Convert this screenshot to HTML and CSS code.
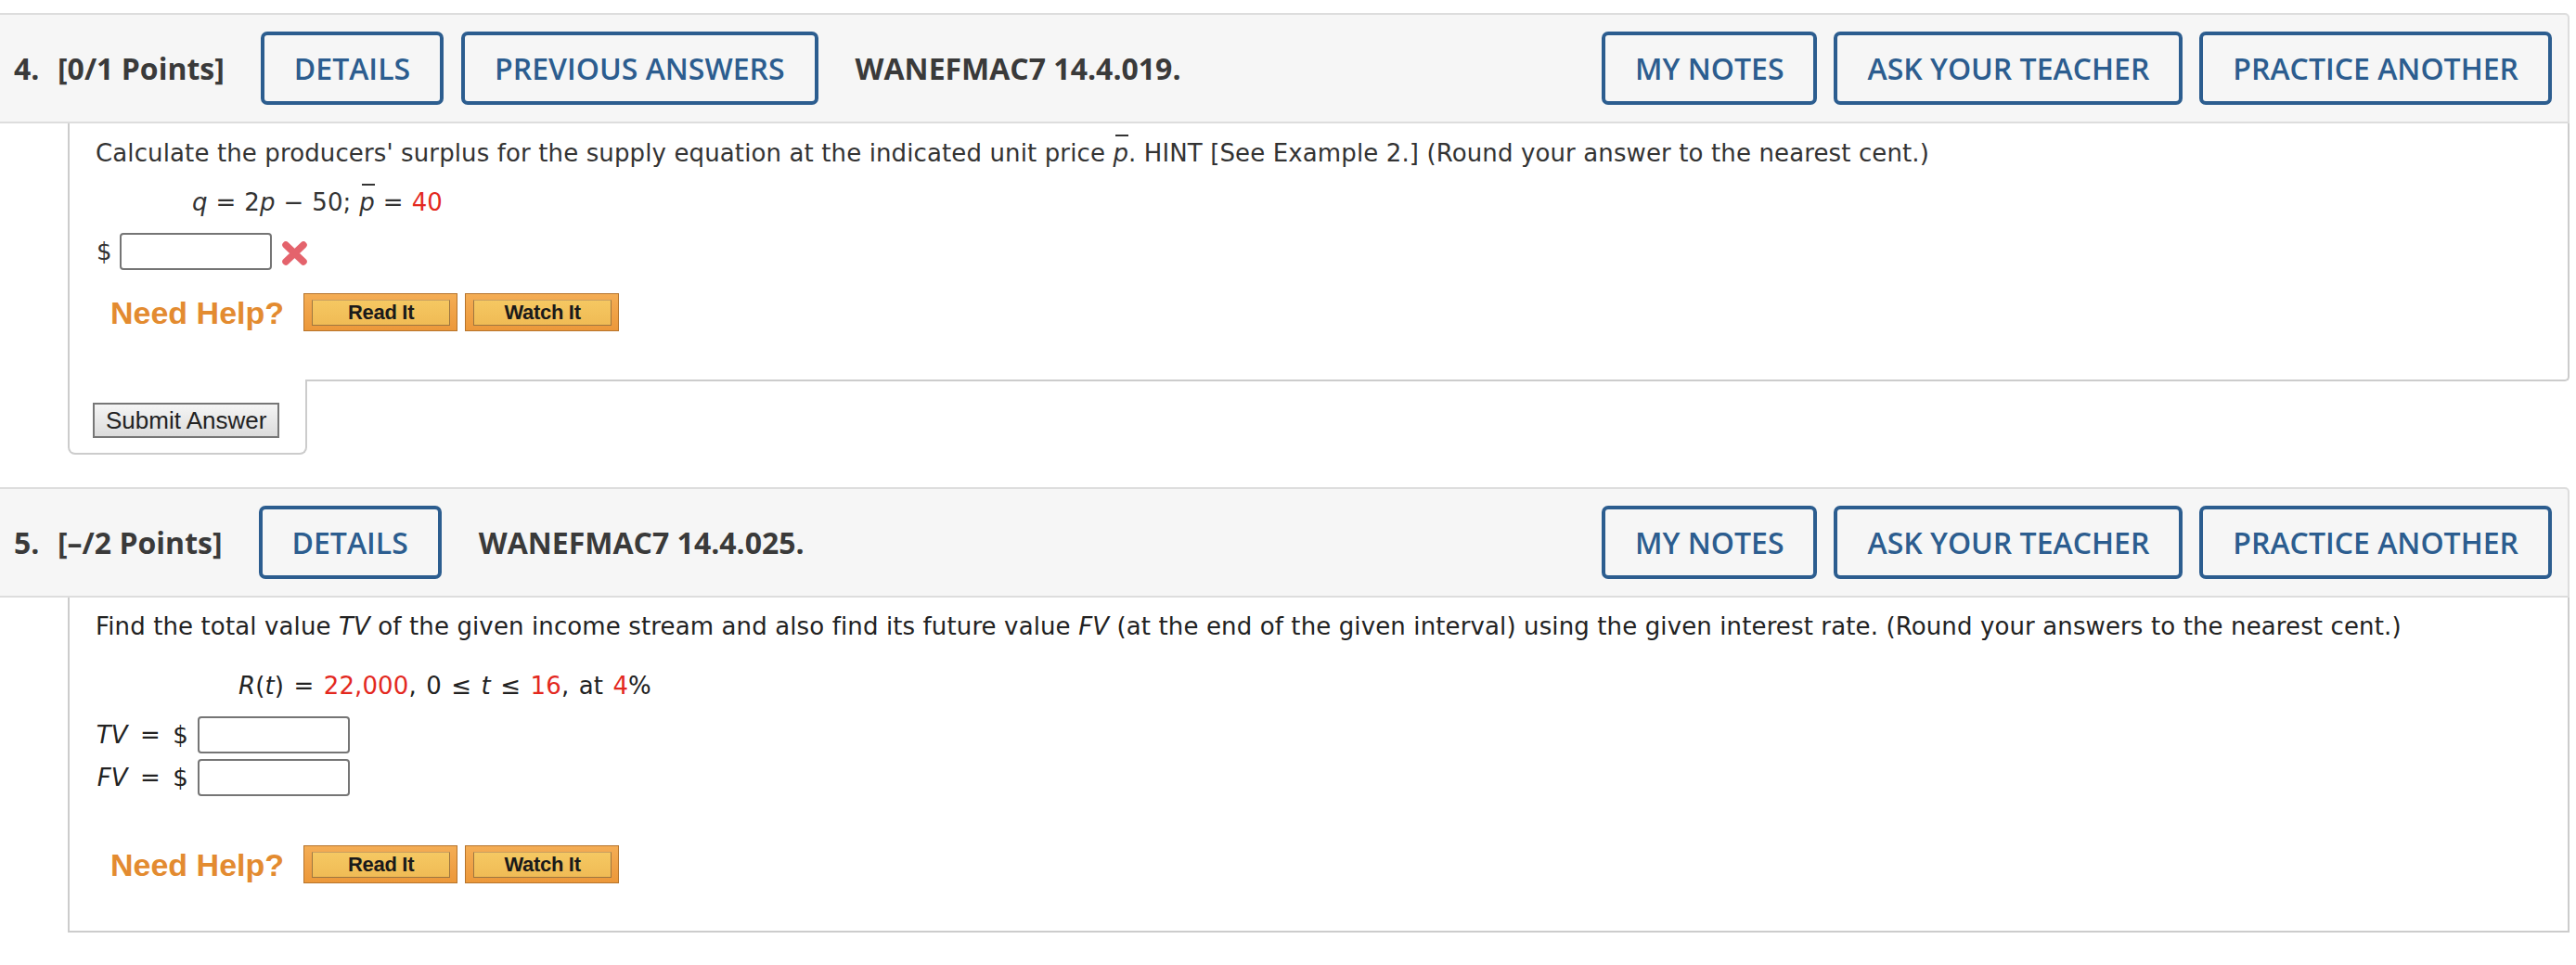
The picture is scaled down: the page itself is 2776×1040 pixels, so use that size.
FILE: index.html
```html
<!DOCTYPE html>
<html lang="en">
<head>
<meta charset="utf-8">
<title>WebAssign</title>
<link rel="stylesheet" href="styles.css">
</head>
<body>
<div class="page">
  <section class="question q4">
    <header class="qhead">
      <span class="qnum">4.</span>
      <span class="qpts">[0/1 Points]</span>
      <div class="btns">
        <button class="hbtn">DETAILS</button>
        <button class="hbtn">PREVIOUS ANSWERS</button>
      </div>
      <span class="qid">WANEFMAC7 14.4.019.</span>
      <div class="btns right">
        <button class="hbtn">MY NOTES</button>
        <button class="hbtn">ASK YOUR TEACHER</button>
        <button class="hbtn">PRACTICE ANOTHER</button>
      </div>
    </header>
    <div class="qbody body4">
      <p class="prompt">Calculate the producers' surplus for the supply equation at the indicated unit price <i class="bar">p</i>. HINT [See Example 2.] (Round your answer to the nearest cent.)</p>
      <div class="eq eq1"><i>q</i> = 2<i>p</i> − 50; <i class="bar">p</i> = <span class="red">40</span></div>
      <div class="answer">
        <span class="dollar">$</span>
        <span class="inp"></span>
        <svg class="xmark" width="29" height="28" viewBox="0 0 29 28"><path d="M5 5 L24 23 M24 5 L5 23" stroke="#e4636c" stroke-width="7.5" stroke-linecap="round"/></svg>
      </div>
      <div class="help">
        <span class="need">Need Help?</span>
        <span class="hb"><span class="hbi">Read It</span></span>
        <span class="hb"><span class="hbi">Watch It</span></span>
      </div>
    </div>
    <div class="tab"><button class="submit">Submit Answer</button></div>
  </section>

  <section class="question q5">
    <header class="qhead">
      <span class="qnum">5.</span>
      <span class="qpts">[–/2 Points]</span>
      <div class="btns">
        <button class="hbtn">DETAILS</button>
      </div>
      <span class="qid">WANEFMAC7 14.4.025.</span>
      <div class="btns right">
        <button class="hbtn">MY NOTES</button>
        <button class="hbtn">ASK YOUR TEACHER</button>
        <button class="hbtn">PRACTICE ANOTHER</button>
      </div>
    </header>
    <div class="qbody body5">
      <p class="prompt">Find the total value <i>TV</i> of the given income stream and also find its future value <i>FV</i> (at the end of the given interval) using the given interest rate. (Round your answers to the nearest cent.)</p>
      <div class="eq eq2"><i>R</i>(<i>t</i>) = <span class="red">22,000</span>, 0 ≤ <i>t</i> ≤ <span class="red">16</span>, at <span class="red">4</span>%</div>
      <div class="frow first"><span class="lbl"><i>TV</i> = $</span><span class="inp"></span></div>
      <div class="frow"><span class="lbl"><i>FV</i> = $</span><span class="inp"></span></div>
      <div class="help help5">
        <span class="need">Need Help?</span>
        <span class="hb"><span class="hbi">Read It</span></span>
        <span class="hb"><span class="hbi">Watch It</span></span>
      </div>
    </div>
  </section>
</div>
</body>
</html>
```

FILE: styles.css
```css
* { box-sizing: border-box; }

body {
  margin: 0;
  background: #ffffff;
  font-family: "DejaVu Sans", Verdana, sans-serif;
}

.page {
  padding-top: 14px;
  width: 2769px;
}

.question { margin-bottom: 35px; }

/* ---------- header bar ---------- */
.qhead {
  display: flex;
  align-items: center;
  height: 119px;
  background: #f6f6f6;
  border: 2px solid #dddddd;
  border-left: none;
  border-radius: 0 5px 0 0;
  padding: 0 17px 0 15px;
  font-family: "Open Sans", sans-serif;
  color: #3a3a3a;
}

.qnum {
  width: 47px;
  font-weight: 700;
  font-size: 32px;
}

.qpts {
  font-weight: 700;
  font-size: 32px;
  margin-right: 39px;
}

.qid {
  font-weight: 700;
  font-size: 32px;
  margin-left: 40px;
}

.btns {
  display: flex;
  gap: 19px;
}

.btns.right {
  margin-left: auto;
  gap: 18px;
}

.hbtn {
  height: 79px;
  padding: 0 32px;
  border: 4px solid #2c5d8f;
  border-radius: 7px;
  background: transparent;
  color: #2c5d8f;
  font-family: "Open Sans", sans-serif;
  font-weight: 600;
  font-size: 32px;
  line-height: 1;
}

/* ---------- question body ---------- */
.qbody {
  margin-left: 73px;
  border: 2px solid #cccccc;
  border-top: none;
  border-radius: 0 0 5px 0;
  padding: 16px 20px 52px 28px;
  font-size: 26px;
  line-height: 32px;
  letter-spacing: 0.12px;
  color: #333333;
}

.body5 {
  padding-top: 15px;
  padding-bottom: 51px;
  border-radius: 0;
  color: #222222;
}

.prompt { margin: 0; }

.bar {
  position: relative;
}
.bar::before {
  content: "";
  position: absolute;
  left: 3px;
  right: 0;
  top: -5px;
  border-top: 2px solid currentColor;
}

.red { color: #e3281e; }

.eq1 {
  margin-top: 21px;
  padding-left: 104px;
  word-spacing: 0.5px;
}

.eq2 {
  margin-top: 32px;
  padding-left: 154px;
  word-spacing: 2px;
}

.answer {
  margin-top: 17px;
  display: flex;
  align-items: center;
  padding-left: 1px;
}

.dollar { margin-right: 8px; }

.inp {
  display: block;
  width: 164px;
  height: 40px;
  border: 2px solid #757575;
  border-radius: 4px;
  background: #ffffff;
}

.xmark {
  margin-left: 10px;
  margin-top: 4px;
}

.frow {
  display: flex;
  align-items: center;
  margin-top: 6px;
}
.frow.first { margin-top: 17px; }

.lbl {
  width: 100px;
  margin-right: 10px;
  text-align: right;
  word-spacing: 5px;
  white-space: nowrap;
}

/* ---------- need help ---------- */
.help {
  margin-top: 25px;
  display: flex;
  align-items: center;
  padding-left: 16px;
}
.help5 { margin-top: 53px; }

.need {
  font-family: "Liberation Sans", Arial, sans-serif;
  font-weight: 700;
  font-size: 34px;
  line-height: 1;
  letter-spacing: 0;
  color: #e38b30;
  margin-right: 21px;
}

.hb {
  display: block;
  width: 166px;
  height: 41px;
  margin-right: 8px;
  padding: 6px 7px 5px 8px;
  border: 1px solid #b6742c;
  background: linear-gradient(#f4ad55, #ec983a);
}

.hbi {
  display: flex;
  align-items: center;
  justify-content: center;
  height: 100%;
  border: 1px solid #9d7640;
  border-top-color: #c9a060;
  background: linear-gradient(#f5c862, #f0bb55);
  font-family: "Liberation Sans", Arial, sans-serif;
  font-weight: 700;
  font-size: 22px;
  letter-spacing: -0.3px;
  color: #1a1a1a;
  line-height: 1;
}

/* ---------- submit tab ---------- */
.tab {
  margin-left: 73px;
  margin-top: -2px;
  width: 258px;
  border: 2px solid #cccccc;
  border-top: none;
  border-radius: 0 0 8px 8px;
  background: #ffffff;
  padding: 25px 0 16px 25px;
  position: relative;
}

.submit {
  display: block;
  width: 201px;
  height: 38px;
  padding: 0 0 0 12px;
  text-align: left;
  border: 2px solid #777777;
  border-radius: 0;
  background: linear-gradient(#f5f5f5, #dcdcdc);
  font-family: "Liberation Sans", Arial, sans-serif;
  font-size: 26px;
  line-height: 1;
  letter-spacing: 0;
  color: #222222;
}
```
